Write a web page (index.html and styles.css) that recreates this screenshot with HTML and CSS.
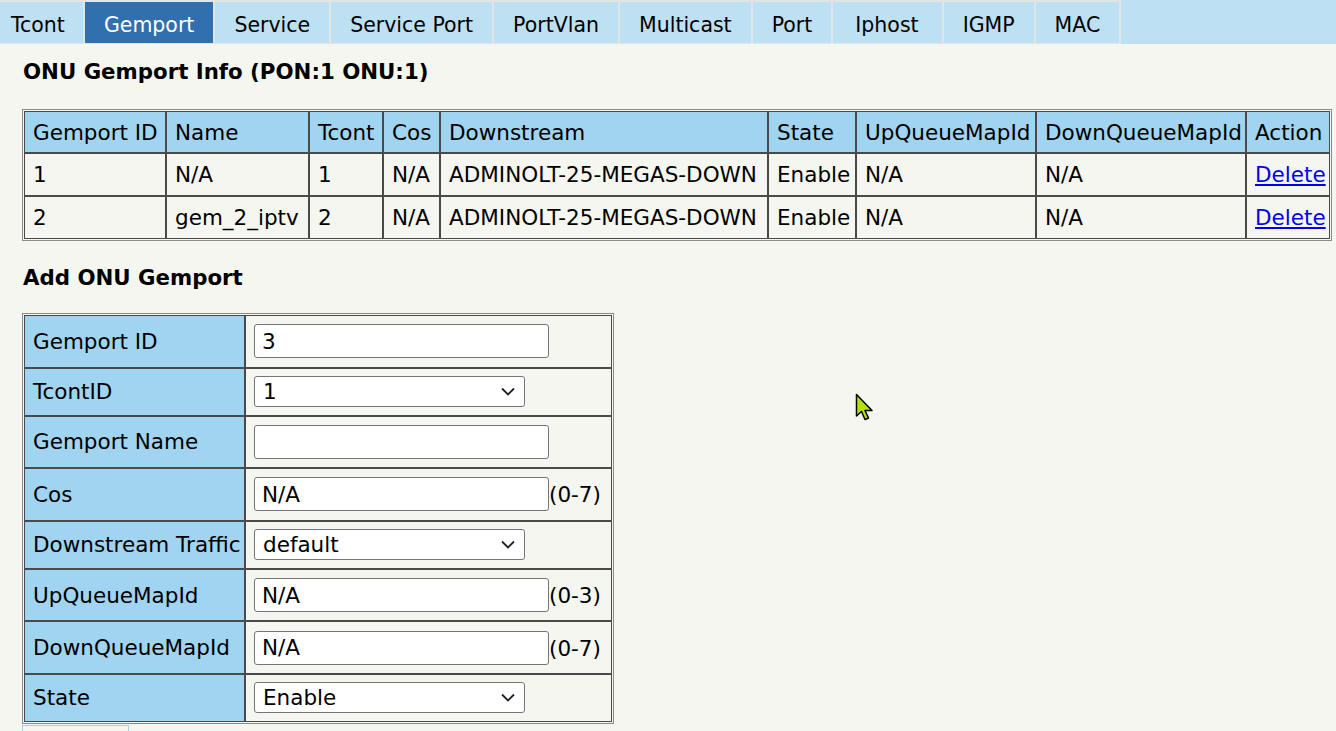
FILE: index.html
```html
<!DOCTYPE html>
<html>
<head>
<meta charset="utf-8">
<link rel="stylesheet" href="styles.css">
</head>
<body>
<div class="tabbar">
  <div class="tab first">Tcont</div>
  <div class="tab active">Gemport</div>
  <div class="tab">Service</div>
  <div class="tab">Service Port</div>
  <div class="tab">PortVlan</div>
  <div class="tab">Multicast</div>
  <div class="tab">Port</div>
  <div class="tab wide">Iphost</div>
  <div class="tab">IGMP</div>
  <div class="tab">MAC</div>
</div>
<div class="content">
  <h2 class="title">ONU Gemport Info (PON:1 ONU:1)</h2>
  <table class="info">
    <colgroup>
      <col class="w1"><col class="w2"><col class="w3"><col class="w4"><col class="w5"><col class="w6"><col class="w7"><col class="w8"><col class="w9">
    </colgroup>
    <tr class="head">
      <td>Gemport ID</td><td>Name</td><td>Tcont</td><td>Cos</td><td>Downstream</td><td>State</td><td>UpQueueMapId</td><td>DownQueueMapId</td><td>Action</td>
    </tr>
    <tr>
      <td>1</td><td>N/A</td><td>1</td><td>N/A</td><td>ADMINOLT-25-MEGAS-DOWN</td><td>Enable</td><td>N/A</td><td>N/A</td><td><a href="#">Delete</a></td>
    </tr>
    <tr>
      <td>2</td><td>gem_2_iptv</td><td>2</td><td>N/A</td><td>ADMINOLT-25-MEGAS-DOWN</td><td>Enable</td><td>N/A</td><td>N/A</td><td><a href="#">Delete</a></td>
    </tr>
  </table>
  <h2 class="title second">Add ONU Gemport</h2>
  <table class="form">
    <colgroup><col class="lw"><col class="vw"></colgroup>
    <tr class="r-in"><td class="lbl">Gemport ID</td><td class="val"><input class="txt" value="3"></td></tr>
    <tr class="r-sel"><td class="lbl">TcontID</td><td class="val"><div class="sel"><select><option>1</option></select><svg class="chev" width="14" height="9" viewBox="0 0 14 9"><path d="M1 1.5 L7 7.5 L13 1.5" fill="none" stroke="#222" stroke-width="1.8"/></svg></div></td></tr>
    <tr class="r-in"><td class="lbl">Gemport Name</td><td class="val"><input class="txt" value=""></td></tr>
    <tr class="r-in"><td class="lbl">Cos</td><td class="val"><input class="txt" value="N/A"><span class="range">(0-7)</span></td></tr>
    <tr class="r-sel"><td class="lbl">Downstream Traffic</td><td class="val"><div class="sel"><select><option>default</option></select><svg class="chev" width="14" height="9" viewBox="0 0 14 9"><path d="M1 1.5 L7 7.5 L13 1.5" fill="none" stroke="#222" stroke-width="1.8"/></svg></div></td></tr>
    <tr class="r-in"><td class="lbl">UpQueueMapId</td><td class="val"><input class="txt" value="N/A"><span class="range">(0-3)</span></td></tr>
    <tr class="r-in"><td class="lbl">DownQueueMapId</td><td class="val"><input class="txt" value="N/A"><span class="range">(0-7)</span></td></tr>
    <tr class="r-sel"><td class="lbl">State</td><td class="val"><div class="sel"><select><option>Enable</option></select><svg class="chev" width="14" height="9" viewBox="0 0 14 9"><path d="M1 1.5 L7 7.5 L13 1.5" fill="none" stroke="#222" stroke-width="1.8"/></svg></div></td></tr>
  </table>
  <button class="btn"></button>
</div>
<svg class="cursor" width="22" height="30" viewBox="0 0 22 30">
  <path d="M1.5 1.5 L1.5 23 L6.5 18.5 L10 26.5 L13.5 25 L10 17.5 L17 17.5 Z" fill="#b5e10a" stroke="#000" stroke-width="1.5" stroke-linejoin="round"/>
</svg>
</body>
</html>
```
FILE: styles.css
```css
html, body {
  margin: 0;
  padding: 0;
  background: #f4f6ef;
  font-family: "DejaVu Sans", Verdana, sans-serif;
  font-size: 21.5px;
  color: #000;
}
.tabbar {
  display: flex;
  background: #bde0f2;
  height: 44px;
  box-sizing: border-box;
}
.tab {
  box-sizing: border-box;
  height: 44px;
  padding: 4px 19px 0 19px;
  border: 2px solid #e1e5e6;
  border-left-width: 0;
  border-bottom-width: 1px;
  display: flex;
  align-items: center;
  color: #000;
  font-size: 20.5px;
}
.tab.first {
  padding-left: 11px;
  padding-right: 18px;
}
.tab.wide {
  padding-left: 22px;
  padding-right: 23px;
}
.tab.active {
  background: #3170ae;
  color: #fff;
}
.content {
  padding: 0 0 0 22px;
  position: relative;
}
.title {
  font-size: 21.3px;
  font-weight: bold;
  margin: 15px 0 24px 1px;
  line-height: 26px;
}
.title.second {
  margin-top: 24px;
  margin-bottom: 22px;
}
table {
  border-collapse: separate;
  border-spacing: 0;
  border: 1px solid #8a8a8a;
  padding: 1px;
  table-layout: fixed;
}
td {
  border: 1px solid #4a4a4a;
  white-space: nowrap;
  overflow: hidden;
}
.info {
  width: 1310px;
}
.info td {
  padding: 0 0 0 8px;
  height: 43px;
  box-sizing: border-box;
}
.info .head td {
  background: #a0d4f0;
  height: 42px;
}
.info a {
  color: #0000ee;
}
.w1 { width: 142px; }
.w2 { width: 143px; }
.w3 { width: 74px; }
.w4 { width: 57px; }
.w5 { width: 328px; }
.w6 { width: 88px; }
.w7 { width: 180px; }
.w8 { width: 210px; }
.w9 { width: 84px; }
.form {
  width: 592px;
}
.lw { width: 221px; }
.vw { width: 367px; }
.form .lbl {
  background: #a0d4f0;
  padding: 0 0 0 8px;
  box-sizing: border-box;
}
.form .val {
  padding: 0 0 0 8px;
  box-sizing: border-box;
}
.r-in td { height: 52.6px; }
.r-sel td { height: 48px; }
.txt {
  box-sizing: border-box;
  width: 295px;
  height: 34px;
  border: 1px solid #767676;
  border-radius: 3px;
  background: #fff;
  font-family: "DejaVu Sans", Verdana, sans-serif;
  font-size: 21.5px;
  padding: 0 7px;
  vertical-align: middle;
  margin: 0;
}
.range {
  vertical-align: middle;
}
.sel {
  position: relative;
  display: inline-block;
  vertical-align: middle;
}
.sel select {
  appearance: none;
  -webkit-appearance: none;
  box-sizing: border-box;
  width: 271px;
  height: 31px;
  border: 1px solid #767676;
  border-radius: 3px;
  background: #fff;
  font-family: "DejaVu Sans", Verdana, sans-serif;
  font-size: 21.5px;
  padding: 0 8px;
  margin: 0;
  color: #000;
  display: block;
}
.chev {
  position: absolute;
  right: 10px;
  top: 11px;
  pointer-events: none;
}
.btn {
  display: block;
  margin-top: 1px;
  width: 107px;
  height: 40px;
  border: 1px solid #a8cfe6;
  background: #f4f6ef;
}
.cursor {
  position: absolute;
  left: 855px;
  top: 393px;
}
```
